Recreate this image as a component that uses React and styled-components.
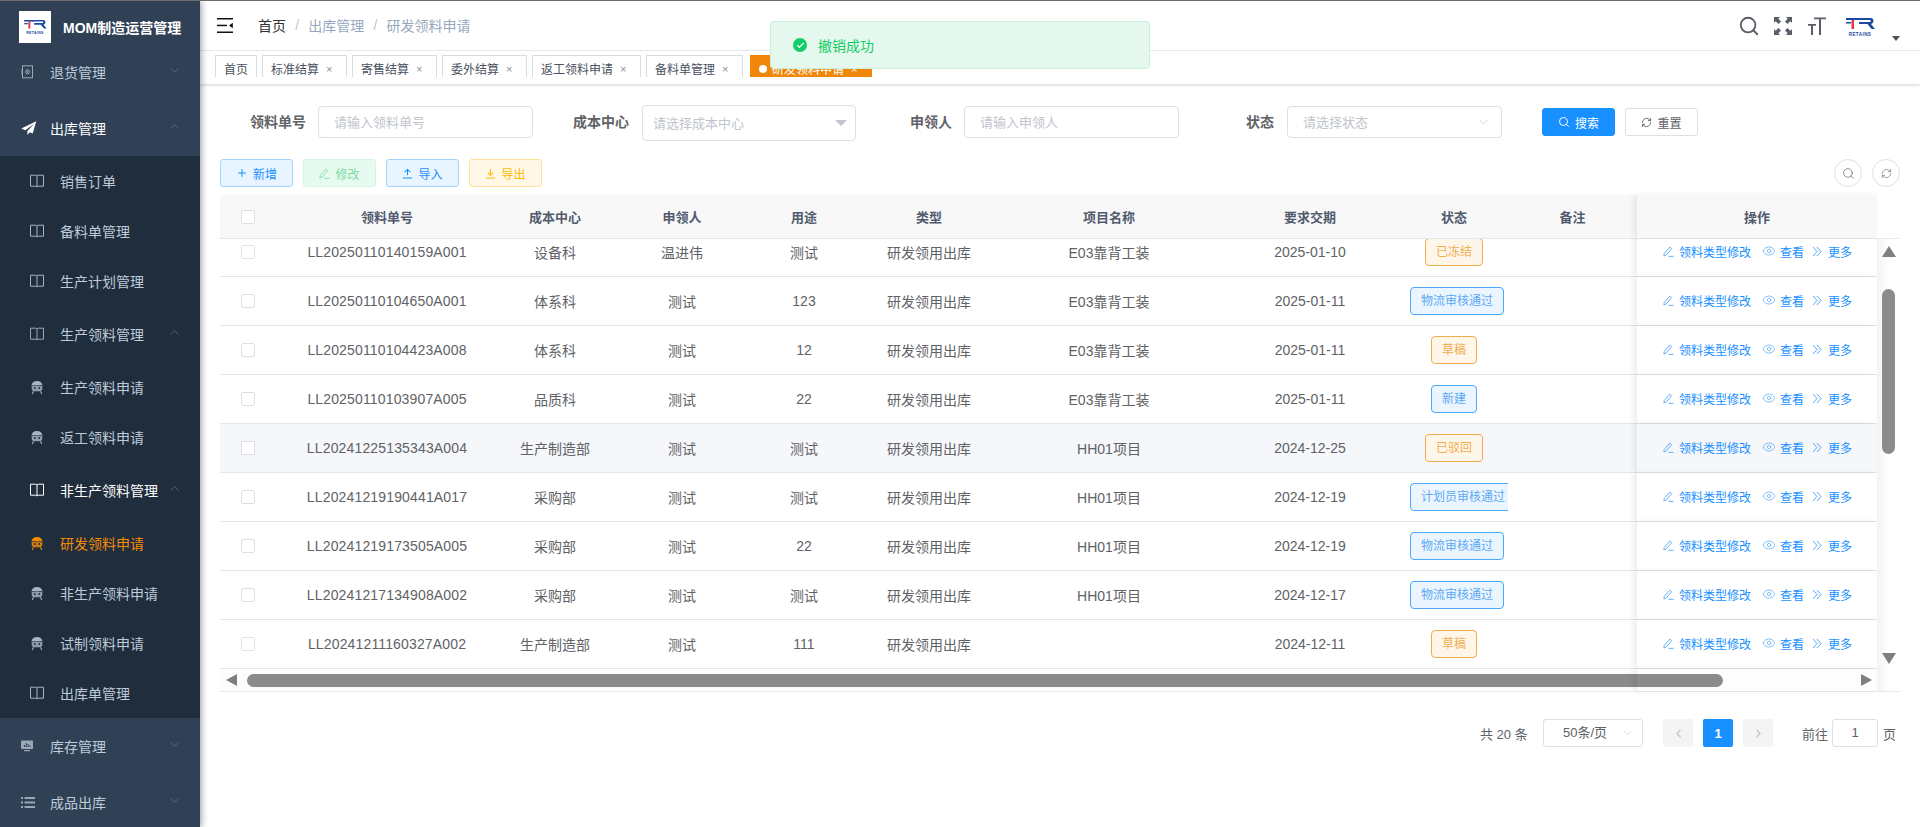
import React from 'react';
import styled, { createGlobalStyle } from 'styled-components';
import { Search, RefreshCw, Plus, Eye, ChevronDown, ChevronUp, ChevronLeft, ChevronRight, Check } from 'lucide-react';

const FONT = '"Liberation Sans", "Noto Sans CJK SC", sans-serif';

const Global = createGlobalStyle`
  html, body { margin: 0; padding: 0; width: 1920px; height: 827px; overflow: hidden; background: #fff; font-family: ${FONT}; }
  * { box-sizing: border-box; }
`;

const Page = styled.div`
  position: relative; display: flex; width: 1920px; height: 827px; overflow: hidden;
  border-top: 1px solid #6b6b6b;
`;
const Sidebar = styled.aside`
  position: relative; z-index: 3; flex: 0 0 200px; width: 200px; height: 826px;
  background: #304156; box-shadow: 2px 0 6px rgba(0, 21, 41, .35); overflow: hidden;
`;
const Brand = styled.div`
  display: flex; align-items: center; height: 43px; padding: 9px 0 0 19px;
`;
const LogoBox = styled.div`
  width: 32px; height: 32px; background: #fff; display: flex; align-items: center; justify-content: center;
`;
const BrandName = styled.span`
  margin-left: 12px; font-size: 14px; font-weight: 700; color: #fff; white-space: nowrap;
`;
const MenuTitle = styled.div`
  display: flex; align-items: center; position: relative; height: 56px; padding-left: ${p => p.$sub ? 30 : 21}px;
  font-size: 14px; color: ${p => p.$on ? '#fff' : '#bfcbd9'};
  & > svg:first-child { flex: 0 0 auto; color: ${p => p.$on ? '#fff' : '#9aa6b4'}; }
`;
const MenuText = styled.span`
  margin-left: ${p => p.$sub ? 16 : 17}px; white-space: nowrap;
`;
const Arrow = styled.span`
  position: absolute; left: 167px; top: 19px; color: #718096; display: flex;
`;
const SubMenu = styled.div`
  background: #1f2d3d;
`;
const SubItem = styled.div`
  display: flex; align-items: center; height: 50px; padding-left: 30px; font-size: 14px;
  color: ${p => p.$on ? '#f58a07' : '#bfcbd9'};
  & > svg { flex: 0 0 14px; color: ${p => p.$on ? '#f58a07' : '#aab4c0'}; }
`;

const Main = styled.main`
  flex: 1; min-width: 0; position: relative; display: flex; flex-direction: column;
`;
const Header = styled.header`
  display: flex; align-items: center; height: 50px; padding-left: 17px; border-bottom: 1px solid #f0f1f3; position: relative;
`;
const Crumbs = styled.nav`
  display: flex; align-items: center; margin: -2px 0 0 25px; font-size: 14px; color: #97a8be;
`;
const CrumbHome = styled.span` color: #303133; `;
const CrumbSep = styled.span` color: #c0c4cc; margin: 0 9.2px; `;
const HeaderTools = styled.div`
  position: absolute; left: 1540px; top: 16px; display: flex; align-items: flex-start; color: #5a5e66;
`;
const ToolIcon = styled.span`
  display: flex; width: 18px; height: 18px; margin-right: 16px;
`;
const LogoSlot = styled.span` display: flex; margin-left: 0; width: 36px; `;
const Caret = styled.span`
  width: 0; height: 0; margin: 19px 0 0 14px; border-left: 4px solid transparent; border-right: 4px solid transparent; border-top: 5px solid #4d5157;
`;
const TagsBar = styled.div`
  height: 33px; padding: 4px 0 0 15px; display: flex; align-items: flex-start; gap: 5px;
  box-shadow: 0 1px 3px rgba(0, 21, 41, .2); position: relative; z-index: 1; background: #fff;
`;
const Tag = styled.div`
  display: flex; align-items: center; height: 22px; padding: 4px 8px 0; font-size: 12px; white-space: nowrap;
  margin-left: ${p => p.$on ? 2 : 0}px;
  color: ${p => p.$on ? '#fff' : '#495060'}; background: ${p => p.$on ? '#f0870a' : '#fff'};
  border: 1px solid ${p => p.$on ? '#f0870a' : '#d8dce5'}; border-bottom: none;
`;
const TagDot = styled.i` width: 8px; height: 8px; border-radius: 50%; background: #fff; margin-right: 5px; `;
const TagClose = styled.span` display: block; width: 19px; padding-left: 7px; font-size: 11px; color: ${p => p.$on ? '#fff' : '#8a8f99'}; `;

const Toast = styled.div`
  position: absolute; left: 570px; top: 20px; z-index: 5; width: 380px; height: 48px; display: flex; align-items: center;
  padding-left: 22px; background: #e5f8ee; border: 1px solid #c9f0db; border-radius: 4px; font-size: 14px; color: #13ce66;
`;
const ToastIcon = styled.span`
  display: flex; align-items: center; justify-content: center; width: 14px; height: 14px; border-radius: 50%; background: #13ce66; color: #fff; margin-right: 11px;
`;

const Content = styled.section` flex: 1; padding: 21px 20px 0; `;
const FormRow = styled.div` display: flex; align-items: flex-start; height: 36px; `;
const Label = styled.label`
  margin-left: ${p => p.$ml}px; width: ${p => p.$w}px; height: 34px; line-height: 34px; font-size: 14px; font-weight: 700; color: #606266; white-space: nowrap;
`;
const Control = styled.div`
  position: relative; display: flex; align-items: center; width: ${p => p.$w}px; height: ${p => p.$h || 32}px; margin: ${p => p.$h ? 0 : 1}px 0 0 ${p => p.$ml}px;
  padding: 0 0 2px ${p => p.$pl || 15}px; border: 1px solid #dcdfe6; border-radius: 4px; font-size: 13px; color: #c0c4cc; white-space: nowrap; background: #fff;
`;
const ControlEnd = styled.span` position: absolute; right: ${p => p.$r}px; top: 50%; transform: translateY(-50%); display: flex; color: #c0c4cc; `;
const TriDown = styled.span` width: 0; height: 0; border-left: 6px solid transparent; border-right: 6px solid transparent; border-top: 6px solid #c0c4cc; `;
const SearchBtn = styled.button`
  display: flex; align-items: center; justify-content: center; gap: 5px; width: ${p => p.$w}px; height: 28px; margin: 3px 0 0 ${p => p.$ml}px; padding: 0;
  font: 12px ${FONT}; border-radius: 3px; color: ${p => p.$primary ? '#fff' : '#606266'};
  background: ${p => p.$primary ? '#1890ff' : '#fff'}; border: 1px solid ${p => p.$primary ? '#1890ff' : '#dcdfe6'};
`;
const Toolbar = styled.div` display: flex; height: 28px; margin-top: 18px; position: relative; `;
const PlainBtn = styled.button`
  display: flex; align-items: center; justify-content: center; gap: 5px; width: 73px; height: 28px; margin-right: 10px; padding: 0;
  font: 12px ${FONT}; border-radius: 3px; color: ${p => p.$c}; background: ${p => p.$bg}; border: 1px solid ${p => p.$bd};
`;
const RoundWrap = styled.div` margin-left: auto; display: flex; gap: 10px; `;
const RoundBtn = styled.button`
  width: 28px; height: 28px; padding: 0; border-radius: 50%; border: 1px solid #dcdfe6; background: #fff; color: #606266; display: flex; align-items: center; justify-content: center;
`;

const TableWrap = styled.div` position: relative; width: 1680px; height: 497px; margin-top: 8px; `;
const COLS = '60px 214px 122px 132px 112px 138px 222px 180px 108px 129px 240px';
const HeadRow = styled.div`
  display: grid; grid-template-columns: ${COLS}; width: 1657px; height: 44px; background: #f8f8f9; border-bottom: 1px solid #e2e7ef;
  font-size: 13px; font-weight: 700; color: #515a6e;
`;
const Body = styled.div` width: 1657px; height: 430px; overflow: hidden; `;
const BodyInner = styled.div` margin-top: -11px; `;
const Row = styled.div`
  display: grid; grid-template-columns: ${COLS}; height: 49px; border-bottom: 1px solid #e2e7ef;
  font-size: 14px; color: #606266; background: ${p => p.$hover ? '#f5f7fa' : '#fff'};
`;
const Cell = styled.div`
  display: flex; align-items: center; justify-content: center; white-space: nowrap; overflow: hidden; min-width: 0; padding-bottom: 1px;
  letter-spacing: ${p => p.$code ? '.15px' : '0'};
`;
const CheckCell = styled.div` display: flex; align-items: center; padding-left: 21px; `;
const CheckBox = styled.span` width: 14px; height: 14px; border: 1px solid #dcdfe6; border-radius: 2px; background: #fff; `;
const StatusCell = styled.div`
  display: flex; align-items: center; justify-content: ${p => p.$over ? 'flex-start' : 'center'}; padding-left: ${p => p.$over ? 10 : 0}px; overflow: hidden; white-space: nowrap;
`;
const StatusTag = styled.span`
  flex: none; display: block; height: 28px; line-height: 26px; padding: 0 10px; font-size: 12px; border-radius: 4px; border: 1px solid;
  color: ${p => p.$warn ? '#f0ad4e' : '#5ca9f5'}; background: ${p => p.$warn ? '#fff6ea' : '#ebf5ff'}; border-color: ${p => p.$warn ? '#f0ad4e' : '#4ba8ff'};
`;
const ActionCell = styled.div`
  position: relative; display: flex; align-items: center; padding: 0 0 2px 26px; font-size: 12px; color: #1890ff; white-space: nowrap;
  background: inherit; box-shadow: -4px 0 6px rgba(0, 0, 0, .07);
`;
const HeadAction = styled(Cell)` position: relative; overflow: visible; background: #f8f8f9; box-shadow: -4px 0 6px rgba(0, 0, 0, .07); `;
const ActionLink = styled.span`
  display: flex; align-items: center; margin-right: ${p => p.$mr}px;
  & > svg { flex: none; margin-right: ${p => p.$gap}px; color: #58a9f8; }
`;
const HBar = styled.div`
  position: relative; width: 1657px; height: 23px; background: #fdfdfd; border-bottom: 1px solid #e6e9f2;
`;
const HThumb = styled.div` position: absolute; left: 27px; top: 5px; width: 1476px; height: 13px; background: #8b8b8b; border-radius: 7px; `;
const HShade = styled.div` position: absolute; left: 1417px; top: 0; width: 240px; height: 22px; box-shadow: -4px 0 6px rgba(0, 0, 0, .07); `;
const ArrowL = styled.i` position: absolute; left: 6px; top: 5px; width: 0; height: 0; border-top: 6.5px solid transparent; border-bottom: 6.5px solid transparent; border-right: 11px solid #7f7f7f; `;
const ArrowR = styled.i` position: absolute; left: 1641px; top: 5px; width: 0; height: 0; border-top: 6.5px solid transparent; border-bottom: 6.5px solid transparent; border-left: 11px solid #7f7f7f; `;
const VBar = styled.div`
  position: absolute; left: 1657px; top: 43px; width: 23px; height: 454px; background: linear-gradient(90deg, #f3f3f3 0, #fff 12px); border-top: 1px solid #e6e9f2; border-bottom: 1px solid #e6e9f2;
`;
const VThumb = styled.div` position: absolute; left: 5px; top: 50px; width: 13px; height: 165px; background: #8b8b8b; border-radius: 7px; `;
const ArrowU = styled.i` position: absolute; left: 5px; top: 7px; width: 0; height: 0; border-left: 7px solid transparent; border-right: 7px solid transparent; border-bottom: 11px solid #7f7f7f; `;
const ArrowD = styled.i` position: absolute; left: 5px; top: 414px; width: 0; height: 0; border-left: 7px solid transparent; border-right: 7px solid transparent; border-top: 11px solid #7f7f7f; `;

const Pager = styled.div` display: flex; align-items: center; height: 28px; margin-top: 27px; font-size: 13px; color: #606266; `;
const PagerTotal = styled.span` margin-left: 1260px; width: 63px; white-space: pre; `;
const PagerSelect = styled.div`
  position: relative; width: 100px; height: 28px; padding-left: 19px; line-height: 26px; border: 1px solid #dcdfe6; border-radius: 3px;
`;
const PageBtn = styled.div`
  display: flex; align-items: center; justify-content: center; width: 30px; height: 28px; margin-left: ${p => p.$ml}px; border-radius: 2px;
  font-weight: 700; font-size: 13px; color: ${p => p.$on ? '#fff' : '#c0c4cc'}; background: ${p => p.$on ? '#1890ff' : '#f4f4f5'};
`;
const Jump = styled.span` margin-left: 29px; `;
const JumpInput = styled.div`
  width: 46px; height: 28px; margin: 0 5px 0 4px; line-height: 26px; text-align: center; border: 1px solid #dcdfe6; border-radius: 3px;
`;

const P = { fill: 'none', stroke: 'currentColor' };
const Book = () => (
  <svg width="14" height="14" viewBox="0 0 14 14" {...P} strokeWidth="1"><path d="M.5 1.2h5.2l1.3.7 1.3-.7h5.2v11H8.3l-1.3.7-1.3-.7H.5z" /><path d="M7 1.9v11" /></svg>
);
const Robot = () => (
  <svg width="14" height="15" viewBox="0 0 15 15">
    <path d="M1.500 5.500C1.800 2.200 4.200.5 7.500.5s5.700 1.700 6 5C11.500 4.600 3.500 4.600 1.500 5.500z" fill="currentColor" />
    <path d="M1.800 6c2-1 9.400-1 11.400 0v2.500c0 2-1.500 3-3 3H4.800c-1.500 0-3-1-3-3z" fill="currentColor" opacity=".82" />
    <circle cx="5.100" cy="8" r="1" fill="#1f2d3d" /><circle cx="9.900" cy="8" r="1" fill="#1f2d3d" />
    <path d="M3.700 11.500L2.400 14.500M11.300 11.500l1.300 3" stroke="currentColor" strokeWidth="1.100" fill="none" />
  </svg>
);
const Plane = () => (
  <svg width="16" height="15" viewBox="0 0 15 14" style={{ marginRight: -4 }}><path d="M14.300.3L.3 7l3.800 1.600L12.300 2.600 6 9.300V13l2.200-2.600 2.800 1.300z" fill="#fff" /></svg>
);
const Safe = () => (
  <svg width="12" height="14" viewBox="0 0 12 14" {...P} strokeWidth="1"><rect x="1.500" y=".8" width="10" height="12" /><circle cx="6.500" cy="6.800" r="2" /><circle cx="6.500" cy="6.800" r=".6" /><path d="M0 5h2M0 7h2M0 9h2" /></svg>
);
const Monitor = () => (
  <svg width="12" height="12" viewBox="0 0 12 12"><rect x="0" y=".5" width="12" height="8.500" rx=".8" fill="currentColor" /><path d="M3.500 7V5M5.300 7V3M7.100 7V4M8.900 7V5.500" stroke="#304156" strokeWidth="1" /><rect x="3" y="10" width="6" height="1.200" fill="currentColor" /></svg>
);
const ListIcon = () => (
  <svg width="14" height="13" viewBox="0 0 14 13" style={{ marginRight: -2 }} fill="currentColor"><rect x="0" y="1" width="2" height="2" /><rect x="3.500" y="1" width="10.500" height="2" /><rect x="0" y="5.500" width="2" height="2" /><rect x="3.500" y="5.500" width="10.500" height="2" /><rect x="0" y="10" width="2" height="2" /><rect x="3.500" y="10" width="10.500" height="2" /></svg>
);
const Edit = ({ s = 11 }) => (
  <svg width={s} height={s} viewBox="0 0 12 12" {...P} strokeWidth="1"><path d="M1.300 8.200L7.400 1.200l2 1.700-6 7L1 10.800z" /><path d="M6 11.300h5.500" /></svg>
);
const DoubleRight = () => (
  <svg width="10" height="11" viewBox="0 0 10 11" {...P} strokeWidth="1"><path d="M1 1l4 4.500L1 10M5 1l4 4.500L5 10" /></svg>
);
const UpLine = ({ down }) => (
  <svg width="11" height="11" viewBox="0 0 12 12" {...P} strokeWidth="1.100">
    {down ? <path d="M6 1v6.500M3 5l3 3 3-3M1 10.800h10" /> : <path d="M6 8V1.500M3 4.500l3-3 3 3M1 10.800h10" />}
  </svg>
);
const Toggle = () => (
  <svg width="16" height="15" viewBox="0 0 16 15" style={{ flex: 'none' }} fill="#111"><rect width="16" height="1.500" y="0" /><rect width="10" height="1.500" y="6.700" /><rect width="16" height="1.500" y="13.500" /><path d="M15.800 4.800v5.400L12 7.500z" /></svg>
);
const Fullscreen = () => (
  <svg width="18" height="18" viewBox="0 0 18 18" fill="currentColor"><path d="M0 0h6L4.300 1.700 7 4.500 4.500 7 1.700 4.300 0 6zM18 0v6l-1.700-1.700L13.500 7 11 4.500l2.700-2.800L12 0zM0 18v-6l1.700 1.700L4.500 11 7 13.500l-2.700 2.800L6 18zM18 18h-6l1.700-1.700L11 13.500l2.500-2.500 2.800 2.700L18 12z" /></svg>
);
const FontSize = () => (
  <svg width="18" height="18" viewBox="0 0 18 18" fill="currentColor"><path d="M6 .5h12v1.800h-5V18h-2V2.300H6zM0 7h8v1.700H5V18H3V8.700H0z" /></svg>
);
const TrLogo = ({ w, h }) => (
  <svg width={w} height={h} viewBox="0 0 36 20">
    <rect x="4" y="1" width="13" height="2" fill="#1d4aa0" />
    <rect x="9.500" y="3" width="2.500" height="9" fill="#e8344a" />
    <path d="M15 1h14c3 0 3.500 5.500 0 6l4 5h-3.500l-4-5H17V5h11c1 0 1-2 0-2H15z" fill="#1d4aa0" />
    <rect x="4" y="5" width="5" height="1.500" fill="#1d4aa0" />
    <text x="18" y="18.500" textAnchor="middle" fontSize="4.600" fontWeight="700" fill="#1d4aa0" fontFamily={FONT} letterSpacing=".4">RETAINS</text>
  </svg>
);

const rows = [
  ['LL20250110140159A001', '设备科', '温进伟', '测试', 'E03靠背工装', '2025-01-10', '已冻结', 1],
  ['LL20250110104650A001', '体系科', '测试', '123', 'E03靠背工装', '2025-01-11', '物流审核通过', 0],
  ['LL20250110104423A008', '体系科', '测试', '12', 'E03靠背工装', '2025-01-11', '草稿', 1],
  ['LL20250110103907A005', '品质科', '测试', '22', 'E03靠背工装', '2025-01-11', '新建', 0],
  ['LL20241225135343A004', '生产制造部', '测试', '测试', 'HH01项目', '2024-12-25', '已驳回', 1],
  ['LL20241219190441A017', '采购部', '测试', '测试', 'HH01项目', '2024-12-19', '计划员审核通过', 0],
  ['LL20241219173505A005', '采购部', '测试', '22', 'HH01项目', '2024-12-19', '物流审核通过', 0],
  ['LL20241217134908A002', '采购部', '测试', '测试', 'HH01项目', '2024-12-17', '物流审核通过', 0],
  ['LL20241211160327A002', '生产制造部', '测试', '111', '', '2024-12-11', '草稿', 1],
];
const heads = ['领料单号', '成本中心', '申领人', '用途', '类型', '项目名称', '要求交期', '状态', '备注'];
const tabs = [['首页', false], ['标准结算', true], ['寄售结算', true], ['委外结算', true], ['返工领料申请', true], ['备料单管理', true]];

const Top = ({ icon, text, on, arrow }) => (
  <MenuTitle $on={on}>
    {icon}<MenuText>{text}</MenuText>
    <Arrow>{arrow === 'up' ? <ChevronUp size={15} strokeWidth={1} /> : <ChevronDown size={15} strokeWidth={1} />}</Arrow>
  </MenuTitle>
);
const Nested = ({ text, on }) => (
  <MenuTitle $sub $on={on}><Book /><MenuText $sub>{text}</MenuText>
    <Arrow><ChevronUp size={15} strokeWidth={1} /></Arrow>
  </MenuTitle>
);
const Item = ({ icon, text, on }) => (
  <SubItem $on={on}>{icon}<MenuText $sub>{text}</MenuText></SubItem>
);

export default function App() {
  return (
    <Page>
      <Global />
      <Sidebar>
        <Brand>
          <LogoBox><TrLogo w={28} h={16} /></LogoBox>
          <BrandName>MOM制造运营管理</BrandName>
        </Brand>
        <Top icon={<Safe />} text="退货管理" />
        <Top icon={<Plane />} text="出库管理" on arrow="up" />
        <SubMenu>
          <Item icon={<Book />} text="销售订单" />
          <Item icon={<Book />} text="备料单管理" />
          <Item icon={<Book />} text="生产计划管理" />
          <Nested text="生产领料管理" />
          <Item icon={<Robot />} text="生产领料申请" />
          <Item icon={<Robot />} text="返工领料申请" />
          <Nested text="非生产领料管理" on />
          <Item icon={<Robot />} text="研发领料申请" on />
          <Item icon={<Robot />} text="非生产领料申请" />
          <Item icon={<Robot />} text="试制领料申请" />
          <Item icon={<Book />} text="出库单管理" />
        </SubMenu>
        <Top icon={<Monitor />} text="库存管理" />
        <Top icon={<ListIcon />} text="成品出库" />
      </Sidebar>
      <Main>
        <Header>
          <Toggle />
          <Crumbs>
            <CrumbHome>首页</CrumbHome><CrumbSep>/</CrumbSep><span>出库管理</span><CrumbSep>/</CrumbSep><span>研发领料申请</span>
          </Crumbs>
          <HeaderTools>
            <ToolIcon><Search size={22} strokeWidth={2} style={{ margin: '-2px' }} /></ToolIcon>
            <ToolIcon><Fullscreen /></ToolIcon>
            <ToolIcon><FontSize /></ToolIcon>
            <LogoSlot><TrLogo w={36} h={20} /></LogoSlot>
            <Caret />
          </HeaderTools>
        </Header>
        <TagsBar>
          {tabs.map(([t, c]) => (
            <Tag key={t}>{t}{c && <TagClose>×</TagClose>}</Tag>
          ))}
          <Tag $on><TagDot />研发领料申请<TagClose $on>×</TagClose></Tag>
        </TagsBar>
        <Toast><ToastIcon><Check size={9} strokeWidth={3} /></ToastIcon>撤销成功</Toast>
        <Content>
          <FormRow>
            <Label $ml={30} $w={56}>领料单号</Label>
            <Control $ml={12} $w={215}>请输入领料单号</Control>
            <Label $ml={40} $w={56}>成本中心</Label>
            <Control $ml={13} $w={214} $h={36} $pl={10}>请选择成本中心<ControlEnd $r={8}><TriDown /></ControlEnd></Control>
            <Label $ml={54} $w={42}>申领人</Label>
            <Control $ml={12} $w={215}>请输入申领人</Control>
            <Label $ml={67} $w={29}>状态</Label>
            <Control $ml={12} $w={215}>请选择状态<ControlEnd $r={10}><ChevronDown size={15} strokeWidth={1.2} /></ControlEnd></Control>
            <SearchBtn $primary $ml={40} $w={73}><Search size={12} />搜索</SearchBtn>
            <SearchBtn $ml={10} $w={73}><RefreshCw size={11} />重置</SearchBtn>
          </FormRow>
          <Toolbar>
            <PlainBtn $c="#1890ff" $bg="#e8f4ff" $bd="#a3d3ff"><Plus size={12} />新增</PlainBtn>
            <PlainBtn $c="#7fdca6" $bg="#e7faf0" $bd="#d0f5e0"><Edit />修改</PlainBtn>
            <PlainBtn $c="#1890ff" $bg="#e8f4ff" $bd="#a3d3ff"><UpLine />导入</PlainBtn>
            <PlainBtn $c="#ffba00" $bg="#fff8e6" $bd="#ffe399"><UpLine down />导出</PlainBtn>
            <RoundWrap>
              <RoundBtn><Search size={13} strokeWidth={1.3} /></RoundBtn>
              <RoundBtn><RefreshCw size={11} strokeWidth={1.3} /></RoundBtn>
            </RoundWrap>
          </Toolbar>
          <TableWrap>
            <HeadRow>
              <CheckCell><CheckBox /></CheckCell>
              {heads.map(h => <Cell key={h}>{h}</Cell>)}
              <HeadAction>操作</HeadAction>
            </HeadRow>
            <Body>
              <BodyInner>
                {rows.map((r, i) => (
                  <Row key={r[0]} $hover={i === 4}>
                    <CheckCell><CheckBox /></CheckCell>
                    <Cell $code>{r[0]}</Cell>
                    <Cell>{r[1]}</Cell>
                    <Cell>{r[2]}</Cell>
                    <Cell>{r[3]}</Cell>
                    <Cell>研发领用出库</Cell>
                    <Cell>{r[4]}</Cell>
                    <Cell>{r[5]}</Cell>
                    <StatusCell $over={r[6].length >= 6}><StatusTag $warn={!!r[7]}>{r[6]}</StatusTag></StatusCell>
                    <Cell />
                    <ActionCell>
                      <ActionLink $mr={11} $gap={5}><Edit />领料类型修改</ActionLink>
                      <ActionLink $mr={8} $gap={4}><Eye size={14} strokeWidth={1.2} />查看</ActionLink>
                      <ActionLink $mr={0} $gap={6}><DoubleRight />更多</ActionLink>
                    </ActionCell>
                  </Row>
                ))}
              </BodyInner>
            </Body>
            <HBar><ArrowL /><HThumb /><ArrowR /><HShade /></HBar>
            <VBar><ArrowU /><VThumb /><ArrowD /></VBar>
          </TableWrap>
          <Pager>
            <PagerTotal>共 20 条</PagerTotal>
            <PagerSelect>50条/页<ControlEnd $r={8}><ChevronDown size={13} strokeWidth={1.2} /></ControlEnd></PagerSelect>
            <PageBtn $ml={20}><ChevronLeft size={13} strokeWidth={2.4} /></PageBtn>
            <PageBtn $ml={10} $on>1</PageBtn>
            <PageBtn $ml={10}><ChevronRight size={13} strokeWidth={2.4} /></PageBtn>
            <Jump>前往</Jump>
            <JumpInput>1</JumpInput>
            <span>页</span>
          </Pager>
        </Content>
      </Main>
    </Page>
  );
}
